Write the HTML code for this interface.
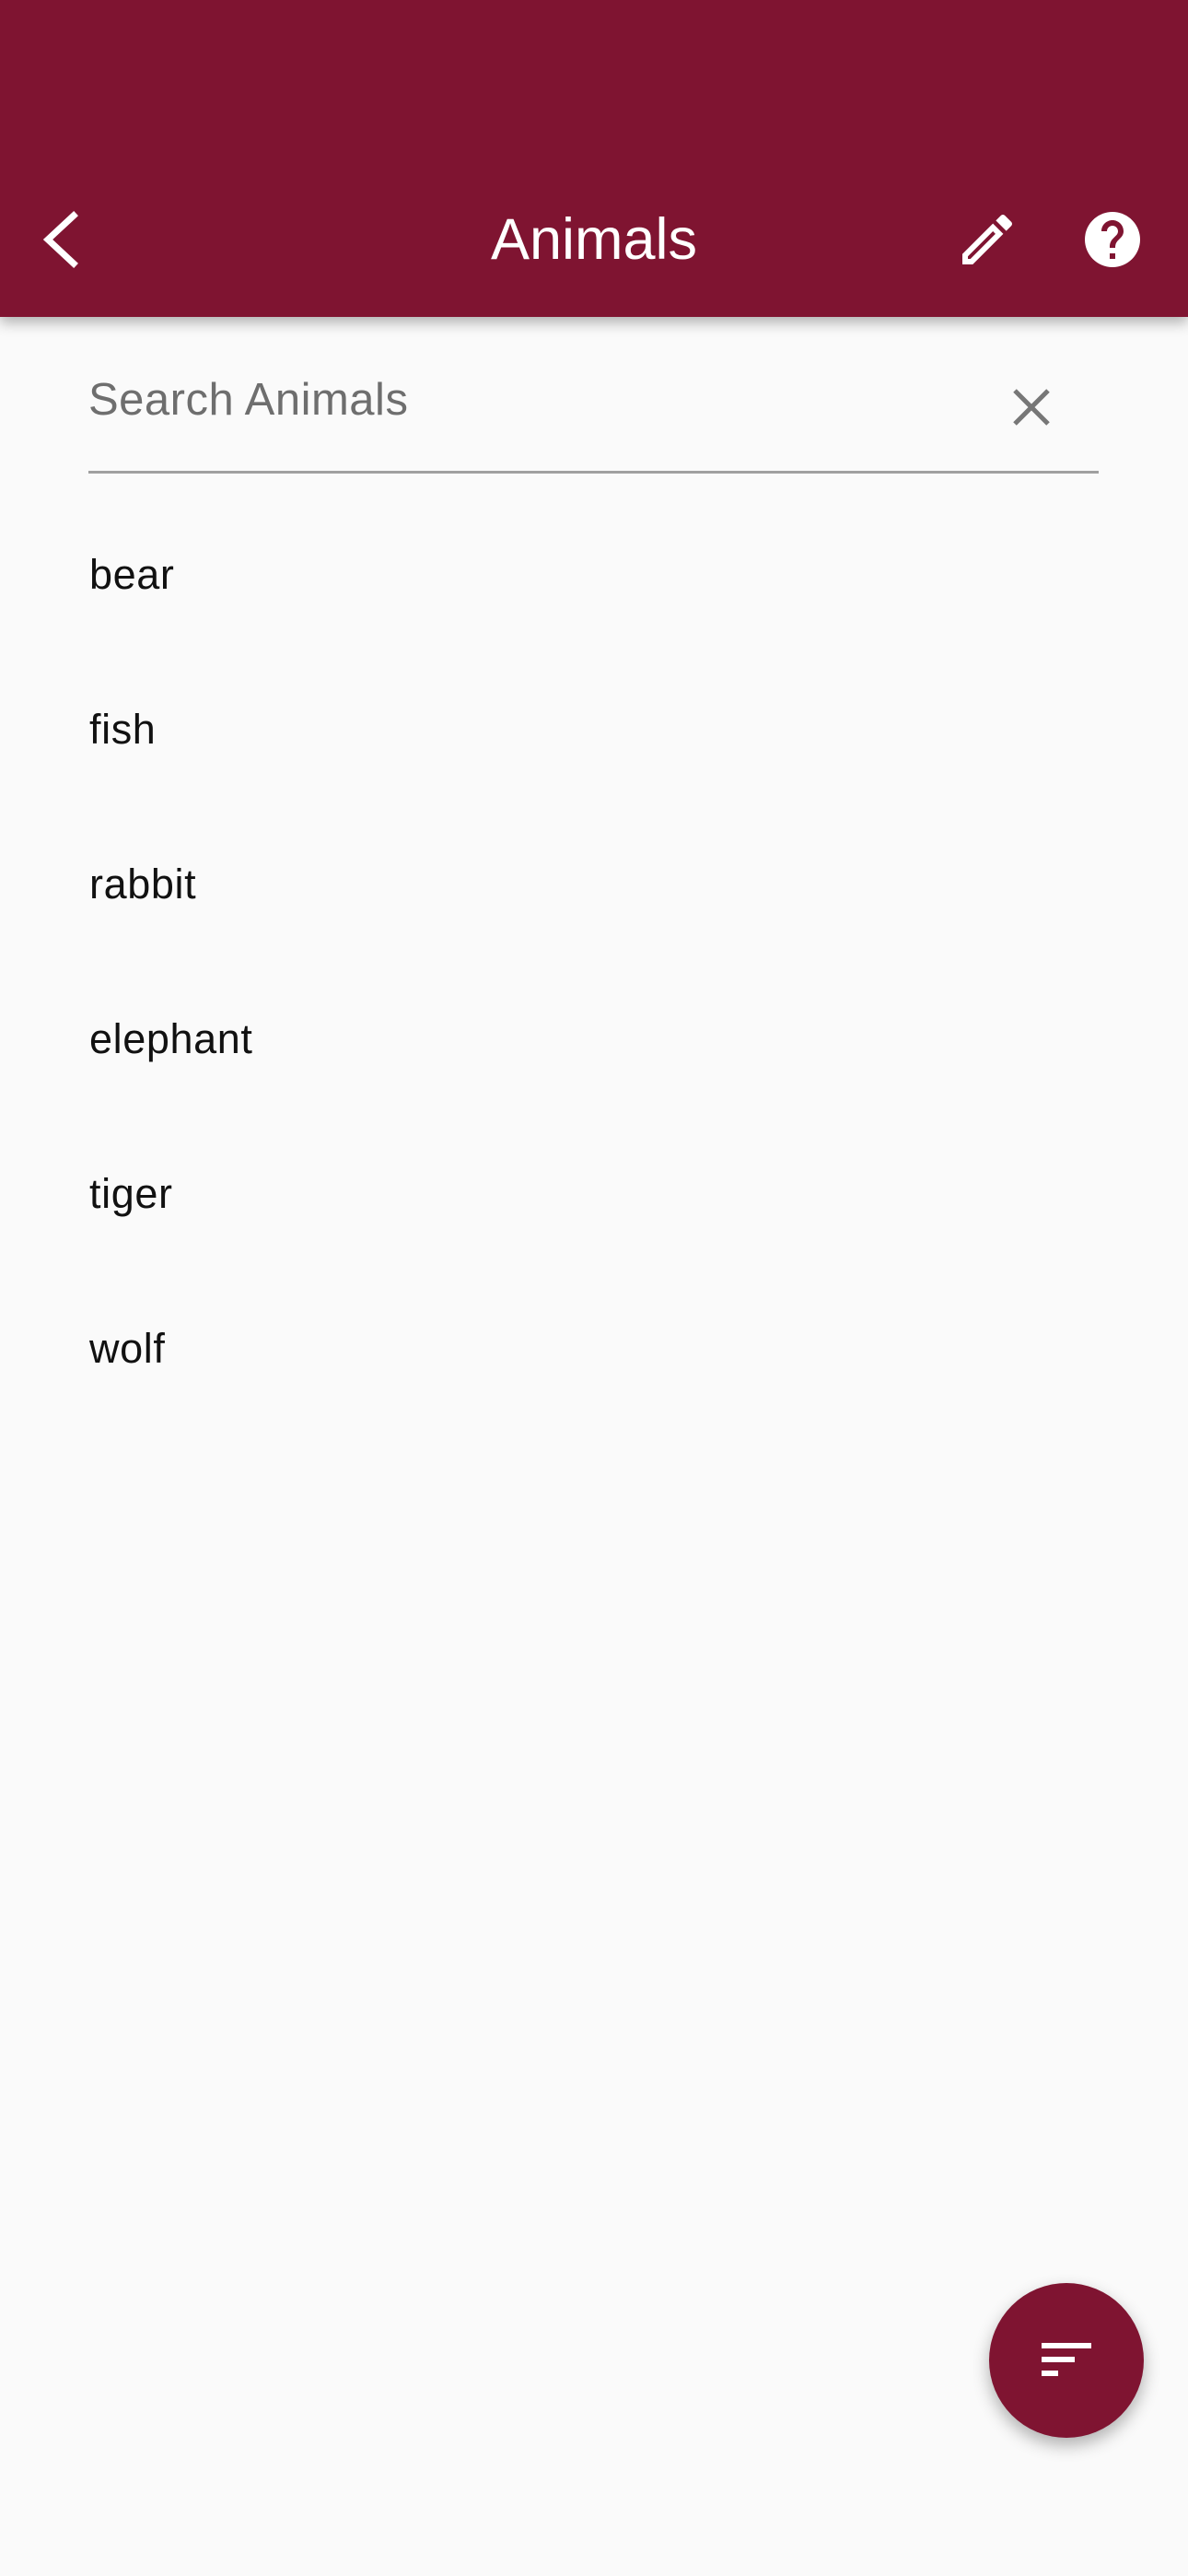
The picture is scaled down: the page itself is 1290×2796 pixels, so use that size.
<!DOCTYPE html>
<html><head><meta charset="utf-8"><style>
html,body{margin:0;padding:0;}
body{width:1290px;height:2796px;background:#fafafa;position:relative;overflow:hidden;font-family:"Liberation Sans",sans-serif;}
.bar{position:absolute;left:0;top:0;width:1290px;height:344px;background:#7f1431;box-shadow:0 6px 14px rgba(0,0,0,0.3);}
.title{position:absolute;left:0;width:1290px;text-align:center;top:224px;font-size:63px;line-height:72px;color:#fff;}
.hint{position:absolute;left:96px;top:404px;font-size:49px;line-height:60px;color:#6e6e6e;letter-spacing:0.5px;}
.line{position:absolute;left:96px;top:511px;width:1097px;height:3px;background:#a0a0a0;}
.item{position:absolute;left:97px;font-size:45px;line-height:50px;color:#111;letter-spacing:0.6px;}
.fab{position:absolute;left:1074px;top:2478px;width:168px;height:168px;border-radius:50%;background:#7f1431;box-shadow:0 8px 18px rgba(0,0,0,0.3);}
</style></head><body>
<div class="bar">
<svg style="position:absolute;left:30px;top:224px" width="72" height="72" viewBox="0 0 72 72"><path d="M50 10 L22 36 L50 62" fill="none" stroke="#fff" stroke-width="7" stroke-linecap="square"/></svg>
<div class="title">Animals</div>
<svg style="position:absolute;left:1036px;top:224px" width="72" height="72" viewBox="0 0 24 24"><path d="M3 17.25V21h3.75L17.81 9.94l-3.75-3.75L3 17.25zM5.92 19H5v-.92l9.06-9.06.92.92L5.92 19zM20.71 5.63l-2.34-2.34a1 1 0 0 0-1.41 0l-1.830 1.83 3.75 3.75 1.83-1.83a1 1 0 0 0 0-1.41z" fill="#fff"/></svg>
<svg style="position:absolute;left:1172px;top:224px" width="72" height="72" viewBox="0 0 24 24"><path d="M12 2C6.48 2 2 6.48 2 12s4.48 10 10 10 10-4.48 10-10S17.52 2 12 2zm1 17h-2v-2h2v2zm2.07-7.75l-.9.92C13.45 12.9 13 13.5 13 15h-2v-.5c0-1.1.45-2.1 1.17-2.83l1.24-1.26c.37-.36.59-.86.59-1.410 0-1.1-.9-2-2-2s-2 .9-2 2H8c0-2.21 1.790-4 4-4s4 1.79 4 4c0 .88-.36 1.68-.93 2.25z" fill="#fff"/></svg>
</div>
<div class="hint">Search Animals</div>
<svg style="position:absolute;left:1096px;top:418px" width="48" height="48" viewBox="0 0 48 48"><path d="M6 6L42 42M42 6L6 42" stroke="#777" stroke-width="5"/></svg>
<div class="line"></div>
<div class="item" style="top:599px">bear</div>
<div class="item" style="top:767px">fish</div>
<div class="item" style="top:935px">rabbit</div>
<div class="item" style="top:1103px">elephant</div>
<div class="item" style="top:1271px">tiger</div>
<div class="item" style="top:1439px">wolf</div>
<div class="fab">
<div style="position:absolute;left:57px;top:65px;width:54px;height:6px;background:#fff"></div>
<div style="position:absolute;left:57px;top:80px;width:36px;height:6px;background:#fff"></div>
<div style="position:absolute;left:57px;top:95px;width:18px;height:6px;background:#fff"></div>
</div>
</body></html>
